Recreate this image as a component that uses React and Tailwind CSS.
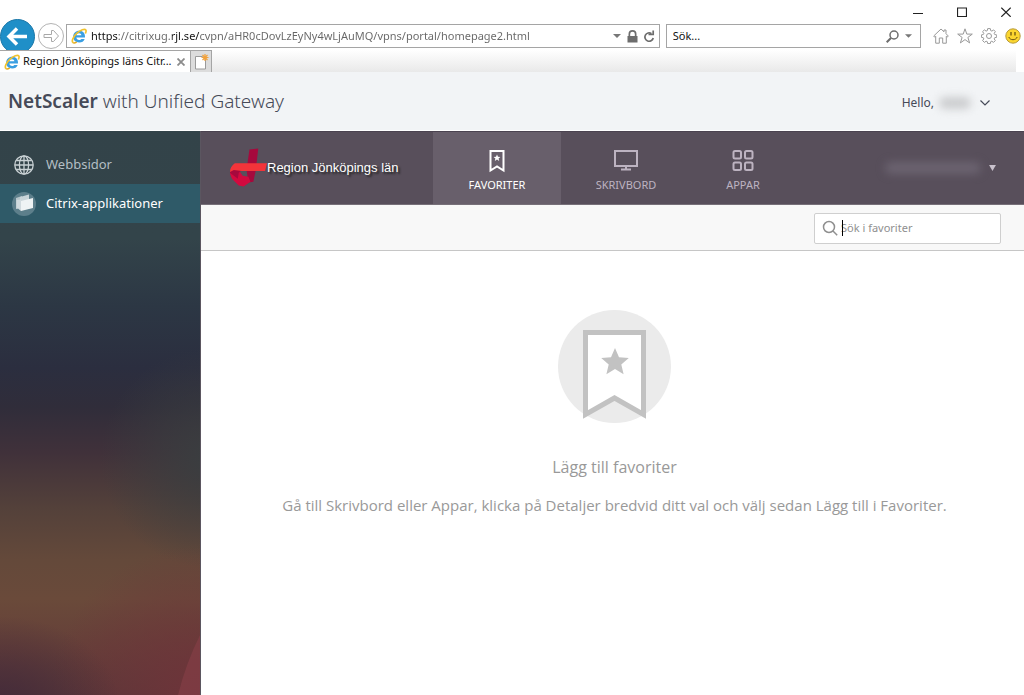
import { useState } from "react";

function IeLogo() {
    return (
        <svg className="h-4 w-4 shrink-0" viewBox="0 0 16 16" fill="none">
            <path
                d="M14 9.600H5.400c.1 1.500 1.200 2.300 2.700 2.300 1 0 1.800-.4 2.200-1h3.400c-.8 2.300-2.800 3.600-5.500 3.600-3.600 0-6-2.300-6-5.700 0-3.500 2.500-6 6-6 3.800 0 6.100 2.600 5.800 6.800zM5.400 7.300h5c-.1-1.300-1.100-2.100-2.400-2.100-1.400 0-2.400.8-2.600 2.100z"
                fill="#3a9fe2"
            />
            <path d="M2 14.600C.2 13 2.300 8.500 6 5.200 9.500 2 13.700.4 14.800 1.900c.6.900.2 2.200-.5 3.600" stroke="#f0c22e" strokeWidth="1.700" />
            <path d="M2 14.600c.9.700 2.200.3 3.700-.5" stroke="#e0a91c" strokeWidth="1.500" />
        </svg>
    );
}

function WindowButtons() {
    return (
        <div className="flex h-6 items-center justify-end gap-[34px] pr-[13px] text-[#222]">
            <button aria-label="Minimera">
                <svg className="h-[10px] w-[10px]" viewBox="0 0 10 10" stroke="currentColor">
                    <path d="M0 6.500h10" />
                </svg>
            </button>
            <button aria-label="Maximera">
                <svg className="h-[10px] w-[10px]" viewBox="0 0 10 10" fill="none" stroke="currentColor">
                    <path d="M.5 1h9v8.500h-9z" strokeWidth="1.200" />
                </svg>
            </button>
            <button aria-label="Stäng">
                <svg className="h-[10px] w-[10px]" viewBox="0 0 10 10" stroke="currentColor">
                    <path d="M.3.8l9.400 9M9.700.8l-9.400 9" strokeWidth="1.200" />
                </svg>
            </button>
        </div>
    );
}

function AddressRow() {
    const [url, setUrl] = useState("https://citrixug.rjl.se/cvpn/aHR0cDovLzEyNy4wLjAuMQ/vpns/portal/homepage2.html");

    return (
        <div className="flex h-6 items-center pr-[3px]">
            <button aria-label="Bakåt" className="-my-2 h-[35px] w-[35px] shrink-0 rounded-full border border-[#1a77a8] bg-[#1f8fc8]">
                <svg className="h-[33px] w-[33px]" viewBox="0 0 33 33" fill="none" stroke="#fff" strokeWidth="3.500">
                    <path d="M7.500 16.500H26M16 8.500l-8 8 8 8" />
                </svg>
            </button>
            <button aria-label="Framåt" className="-my-1 ml-[3px] h-[26px] w-[26px] shrink-0 rounded-full border border-[#b3b3b3]">
                <svg className="h-6 w-6" viewBox="0 0 24 24" fill="none" stroke="#a8a8a8">
                    <path d="M5 10.500h7.500V6.500h2l5 5.500-5 5.500h-2v-4H5z" strokeLinejoin="round" />
                </svg>
            </button>
            <div className="ml-[2px] flex h-6 min-w-0 flex-1 items-center border border-[#a5a5a5] pr-1 pl-1">
                <IeLogo />
                <input
                    aria-label="Adress"
                    value={url}
                    onChange={(e) => setUrl(e.target.value)}
                    className="ml-1 min-w-0 flex-1 bg-[linear-gradient(90deg,#111_0_27px,#666_27px_81px,#111_81px_108px,#666_108px)] bg-clip-text text-[11px] text-transparent outline-none"
                />
                <button aria-label="Visa adresser" className="px-1">
                    <svg className="h-[4px] w-[8px]" viewBox="0 0 8 4" fill="#777">
                        <path d="M0 0h8L4 4z" />
                    </svg>
                </button>
                <svg className="ml-[2px] h-[13px] w-[11px]" viewBox="0 0 11 13" fill="#6d6d6d">
                    <path d="M.5 6h1V4a4 4 0 018 0v2h1v6.500H.5zM3.200 6h4.600V4a2.300 2.300 0 00-4.600 0z" fillRule="evenodd" />
                </svg>
                <button aria-label="Uppdatera" className="ml-[5px]">
                    <svg className="h-[13px] w-[12px]" viewBox="0 0 12 13" fill="none" stroke="#6d6d6d" strokeWidth="1.700">
                        <path d="M8.500 3.600A4.200 4.200 0 1010.200 8" />
                        <path d="M5.500 4.500h4.700V.5" />
                    </svg>
                </button>
            </div>
            <div className="ml-[6px] flex h-6 w-1/4 items-center border border-[#a5a5a5] px-[6px]">
                <input
                    aria-label="Sök på webben"
                    placeholder="Sök..."
                    className="min-w-0 flex-1 text-[11px] outline-none placeholder:text-[#111]"
                />
                <button aria-label="Sök" className="flex items-center gap-[6px] pr-[2px]">
                    <svg className="h-[13px] w-[13px]" viewBox="0 0 13 13" fill="none" stroke="#6d6d6d">
                        <circle cx="8" cy="5" r="4" strokeWidth="1.500" />
                        <path d="M5 8l-4.300 4.300" strokeWidth="2" />
                    </svg>
                    <svg className="h-[4px] w-[7px]" viewBox="0 0 8 4" fill="#777">
                        <path d="M0 0h8L4 4z" />
                    </svg>
                </button>
            </div>
            <div className="ml-3 flex items-center gap-2 text-[#999]">
                <button aria-label="Start">
                    <svg className="h-4 w-4" viewBox="0 0 16 16" fill="none" stroke="currentColor">
                        <path d="M.7 8L8 1l3 2.800V2h2v3.700L15.300 8l-1 1.100-1-.9v7h-3.600V10H6.300v5.200H2.700v-7l-1 .9z" strokeLinejoin="round" />
                    </svg>
                </button>
                <button aria-label="Favoriter">
                    <svg className="h-4 w-4" viewBox="0 0 16 16" fill="none" stroke="currentColor">
                        <path d="M8 .8l1.800 5.300h5.500l-4.400 3.300 1.700 5.500L8 11.600l-4.600 3.300 1.700-5.500L.7 6.100h5.500z" strokeLinejoin="round" />
                    </svg>
                </button>
                <button aria-label="Verktyg">
                    <svg className="h-4 w-4" viewBox="0 0 16 16" fill="none" stroke="currentColor">
                        <path
                            d="M6.700.6h2.600l.4 2 1.200.5 1.700-1.200 1.700 1.700-1.100 1.800.5 1.100 2 .4v2.400l-2 .4-.5 1.200 1.100 1.700-1.800 1.800-1.700-1.200-1.100.5-.4 1.900H6.700l-.4-1.900-1.200-.5-1.700 1.200-1.800-1.800 1.200-1.700-.5-1.200-1.900-.4V6.900l1.900-.4.500-1.100-1.200-1.800 1.800-1.700 1.700 1.200 1.200-.5z"
                            strokeLinejoin="round"
                        />
                        <circle cx="8" cy="8" r="2.500" />
                    </svg>
                </button>
                <button aria-label="Skicka feedback">
                    <svg className="h-4 w-4" viewBox="0 0 16 16">
                        <circle cx="8" cy="8" r="7.200" fill="#fbd62f" stroke="#b89b3c" />
                        <path d="M6 4v3.500M10 4v3.500" stroke="#6a5312" strokeWidth="1.300" />
                        <path d="M3.800 9c1.200 3.600 7.200 3.600 8.400 0" fill="none" stroke="#6a5312" />
                    </svg>
                </button>
            </div>
        </div>
    );
}

function TabRow() {
    return (
        <div className="relative mt-[2px] flex h-[22px] bg-white">
            <div className="flex w-[190px] items-center border-t border-[#a5a5a5] bg-white pr-[5px] pl-1">
                <IeLogo />
                <span className="ml-[3px] flex-1 text-[11px] whitespace-nowrap text-[#111]">Region Jönköpings läns Citr...</span>
                <button aria-label="Stäng flik">
                    <svg className="h-2 w-2" viewBox="0 0 8 8" stroke="#8c8c8c" strokeWidth="1.800">
                        <path d="M.5.5l7 7M7.500.5l-7 7" />
                    </svg>
                </button>
            </div>
            <button aria-label="Ny flik" className="flex w-[22px] items-center justify-center border border-b-0 border-[#a5a5a5] bg-[#dcdcdc]">
                <svg className="h-4 w-4" viewBox="0 0 16 16">
                    <path d="M2.500 2.500h7l3 3v9.500h-10z" fill="#fff" stroke="#9a9a9a" />
                    <path d="M12 0v7M8.500 3.500h7M9.500 1l5 5M14.500 1l-5 5" stroke="#f2a13a" strokeWidth="1.200" />
                </svg>
            </button>
            <div className="mr-2 flex-1 bg-linear-to-b from-white to-[#e9e9e9]" />
        </div>
    );
}

function GatewayHeader() {
    return (
        <header className="flex h-[59px] items-center justify-between border-b border-white bg-[#f2f4f6] pr-[34px] pl-2">
            <h1 className="text-[19px] font-light text-[#464a58]">
                <span className="font-semibold">NetScaler</span> with Unified Gateway
            </h1>
            <button className="mt-1 flex items-center text-[12px] text-[#464a58]">
                Hello,
                <span className="mx-[5px] h-3 w-8 rounded-full bg-[#cbccce] blur-xs" />
                <svg className="ml-1 h-[6px] w-[10px]" viewBox="0 0 10 6" fill="none" stroke="currentColor" strokeWidth="1.200">
                    <path d="M.5.5L5 5 9.500.5" />
                </svg>
            </button>
        </header>
    );
}

function Sidebar() {
    return (
        <aside className="relative w-[201px] shrink-0 border-r border-[#5b5660] bg-[radial-gradient(ellipse_120px_90px_at_0%_102%,#432b3a_0%,transparent_100%),radial-gradient(ellipse_150px_150px_at_100%_100%,#6e343a_0%,transparent_100%),radial-gradient(ellipse_110px_110px_at_105%_58%,#3a3e40_0%,transparent_100%),linear-gradient(#334349_0%,#33444a_19%,#2c3744_31%,#2b2e3f_42%,#302d3a_49%,#40313a_57%,#54413a_67%,#64493a_76%,#6a4a3a_83%,#653f39_92%,#5a3738_100%)] pt-[14px]">
            <nav className="text-[13px]">
                <a href="#webbsidor" className="flex h-[39px] items-center pl-[14px] text-[#b4bfc4]">
                    <svg className="h-5 w-5" viewBox="0 0 20 20" fill="none" stroke="#c9d1d4" strokeWidth="1.300">
                        <circle cx="10" cy="10" r="9.200" />
                        <ellipse cx="10" cy="10" rx="4.600" ry="9.200" />
                        <path d="M10 1v18M1 10h18M2.500 5.500h15M2.500 14.500h15" />
                    </svg>
                    <span className="ml-3">Webbsidor</span>
                </a>
                <a href="#citrix" className="flex h-[39px] items-center bg-[#2f5a68] pl-3 text-white">
                    <svg className="h-6 w-6" viewBox="0 0 24 24">
                        <circle cx="12" cy="12" r="12" fill="#5d7f8b" />
                        <path d="M4 6l6-2v10l-6 3z" fill="#b7c6cb" />
                        <path d="M8 5l9-2.500v12L8 17z" fill="#c9d5d9" />
                        <path d="M9 9l12-3v10L9 19z" fill="#eef3f4" />
                        <path d="M4.500 8L9 7.500V19l-3-2.500-1.500.5z" fill="#d0dade" />
                    </svg>
                    <span className="ml-[10px]">Citrix-applikationer</span>
                </a>
            </nav>
            <svg className="absolute right-0 bottom-0 h-[60px] w-6" viewBox="0 0 24 60">
                <path d="M24 0v60H2Q10 28 24 0z" fill="#873f48" opacity="0.600" />
            </svg>
        </aside>
    );
}

function RegionLogo() {
    return (
        <a href="#start" className="flex w-[232px] shrink-0 items-center pl-[28px]">
            <svg className="h-10 w-[38px] shrink-0" viewBox="0 0 39 40">
                <path d="M21 1l9-1-2.500 22L25 34l-5 1-2-13z" fill="#a6093d" />
                <path d="M2 22h8l4 6 6 1 2 5-7 5-5-1-7-7-2-5z" fill="#d20a3f" />
                <path d="M2 22h11l-3 3-1 6-8-6z" fill="#a6093d" />
                <path d="M6 15h33l-2 8H13l-8-1-4 2c0-4 2-7 5-9z" fill="#f3343a" />
            </svg>
            <span className="font-['Liberation_Sans',sans-serif] text-[13px] whitespace-nowrap text-white [text-shadow:2px_2px_2px_#222]">
                Region Jönköpings län
            </span>
        </a>
    );
}

function StoreNav() {
    return (
        <div className="flex h-[74px] border-t border-b border-t-[#4b4350] border-b-[#777079] bg-[#584f5b]">
            <RegionLogo />
            <nav className="flex text-[11px] text-[#bdb3c1]">
                <a href="#favoriter" className="flex w-32 flex-col items-center bg-[#685f6b] pt-[17px] text-white">
                    <svg className="h-6 w-4" viewBox="0 0 16 24" fill="none">
                        <path d="M1.500 2h13v19.500L8 17.500l-6.500 4z" stroke="currentColor" strokeWidth="2" />
                        <path d="M8 5.500l1 2.200 2.400.2-1.800 1.600.6 2.400L8 10.600l-2.200 1.300.6-2.400-1.800-1.600 2.400-.2z" fill="currentColor" />
                    </svg>
                    <span className="mt-1">FAVORITER</span>
                </a>
                <a href="#skrivbord" className="flex w-[130px] flex-col items-center pt-[17px]">
                    <svg className="h-6 w-6" viewBox="0 0 24 24" fill="none" stroke="currentColor" strokeWidth="2">
                        <path d="M1 2h22v15H1zM12 17v4M7 20.500h10" />
                    </svg>
                    <span className="mt-1">SKRIVBORD</span>
                </a>
                <a href="#appar" className="flex w-[104px] flex-col items-center pt-[17px]">
                    <svg className="h-6 w-[22px]" viewBox="0 0 22 24" fill="none" stroke="currentColor" strokeWidth="2">
                        <rect x="1.500" y="2" width="7.500" height="7.500" rx="1.500" />
                        <rect x="13" y="2" width="7.500" height="7.500" rx="1.500" />
                        <rect x="1.500" y="13.500" width="7.500" height="7.500" rx="1.500" />
                        <rect x="13" y="13.500" width="7.500" height="7.500" rx="1.500" />
                    </svg>
                    <span className="mt-1">APPAR</span>
                </a>
            </nav>
            <button aria-label="Konto" className="mr-7 ml-auto flex items-center gap-2">
                <span className="h-3 w-24 rounded-full bg-[#6b6370] blur-xs" />
                <svg className="h-[6px] w-[7px]" viewBox="0 0 8 7" fill="#c9c2cd">
                    <path d="M0 0h8L4 7z" />
                </svg>
            </button>
        </div>
    );
}

function SearchBar() {
    return (
        <div className="flex h-[46px] items-center justify-end border-b border-[#c6c6c6] bg-[#f8f8f8] pt-px pr-[23px]">
            <label className="relative flex h-[31px] w-[187px] items-center rounded-xs border border-[#cfcfcf] bg-white pl-[7px]">
                <svg className="h-4 w-4 shrink-0" viewBox="0 0 16 16" fill="none" stroke="#8f8f8f" strokeWidth="1.500">
                    <circle cx="7" cy="7" r="5.500" />
                    <path d="M11 11l4.200 4.200" />
                </svg>
                <span className="absolute left-[27px] h-4 w-px bg-black" />
                <input
                    aria-label="Sök i favoriter"
                    placeholder="Sök i favoriter"
                    className="ml-[3px] w-full min-w-0 pt-px text-[11px] outline-none placeholder:text-[#8f8f8f]"
                />
            </label>
        </div>
    );
}

function EmptyFavorites() {
    return (
        <main className="flex flex-1 flex-col items-center bg-white pt-[59px] pl-1 text-center font-['Open_Sans',sans-serif] text-[#999]">
            <svg className="h-[113px] w-[113px]" viewBox="0 0 113 113">
                <circle cx="56.500" cy="56.500" r="56.500" fill="#ebebeb" />
                <path d="M27.500 22.500h58v82l-29-16.500-29 16.500z" fill="#fff" stroke="#c2c2c2" strokeWidth="5" />
                <path d="M57 38l4 9.200 9.800.8-7.500 6.500 2.300 9.700L57 59l-8.600 5.200 2.300-9.700-7.500-6.500 9.800-.8z" fill="#c2c2c2" />
            </svg>
            <h2 className="mt-8 text-[16px] leading-6">Lägg till favoriter</h2>
            <p className="mt-[14px] text-[15px] leading-6">
                Gå till Skrivbord eller Appar, klicka på Detaljer bredvid ditt val och välj sedan Lägg till i Favoriter.
            </p>
        </main>
    );
}

export default function App() {
    return (
        <div className="flex min-h-screen flex-col bg-white font-['Noto_Sans','Open_Sans',sans-serif]">
            <WindowButtons />
            <AddressRow />
            <TabRow />
            <GatewayHeader />
            <div className="flex flex-1">
                <Sidebar />
                <div className="flex min-w-0 flex-1 flex-col">
                    <StoreNav />
                    <SearchBar />
                    <EmptyFavorites />
                </div>
            </div>
        </div>
    );
}
